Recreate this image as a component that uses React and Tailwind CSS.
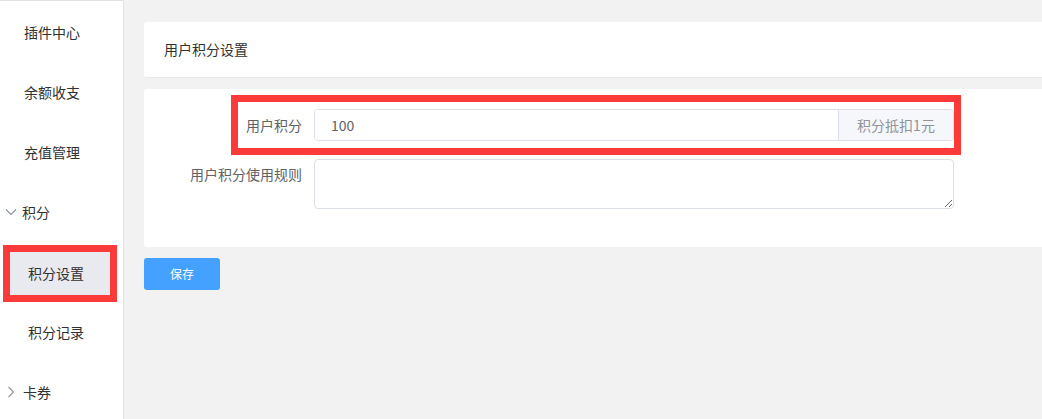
import React from 'react';

const font = { fontFamily: '"Noto Sans CJK SC", "Noto Sans", sans-serif' };

function ChevronDown() {
  return (
    <svg width="12" height="8" viewBox="0 0 12 8" className="mr-[5px] ml-[5px]">
      <path d="M1 1.5 L6 6.5 L11 1.5" fill="none" stroke="#8a8f99" strokeWidth="1.1" />
    </svg>
  );
}

function ChevronRight() {
  return (
    <svg width="8" height="12" viewBox="0 0 8 12" className="ml-[7px] mr-[8px]">
      <path d="M1.5 1 L6.5 6 L1.5 11" fill="none" stroke="#8a8f99" strokeWidth="1.1" />
    </svg>
  );
}

function Sidebar() {
  const item = 'h-[60px] flex items-center text-[14px] text-[#303133]';
  return (
    <aside className="w-[124px] shrink-0 bg-white border-r border-[#e2e2e2] border-t pt-[1px] min-h-[419px]">
      <div className={`${item} pl-[24px]`}>插件中心</div>
      <div className={`${item} pl-[24px]`}>余额收支</div>
      <div className={`${item} pl-[24px]`}>充值管理</div>
      <div className={item}><ChevronDown />积分</div>
      <div className="h-[60px] pt-[3px]">
        <div className="ml-[3px] w-[114px] h-[57px] border-[7px] border-[#fb3a3a] bg-[#e9eaef] flex items-center pl-[18px] text-[14px] text-[#303133]">
          积分设置
        </div>
      </div>
      <div className={`${item} pl-[28px]`}>积分记录</div>
      <div className={item}><ChevronRight />卡券</div>
    </aside>
  );
}

export default function App() {
  return (
    <div className="flex w-[1042px] h-[419px] overflow-hidden bg-[#f2f2f2]" style={font}>
      <Sidebar />
      <main className="flex-1 pt-[22px] pl-[20px]">
        <div className="h-[56px] bg-white rounded-l-[3px] border-b border-[#e8e9ec] flex items-center pl-[20px] text-[14px] text-[#303133]">
          用户积分设置
        </div>
        <div className="relative mt-[11px] h-[158px] bg-white rounded-l-[3px] pt-[20px] pl-[20px]">
          <div className="flex items-center h-[32px]">
            <label className="w-[150px] pr-[12px] text-right text-[14px] text-[#606266]">用户积分</label>
            <div className="flex w-[640px] h-[32px] border border-[#dcdfe6] rounded-[4px] overflow-hidden">
              <input
                defaultValue="100"
                className="flex-1 px-[16px] text-[14px] text-[#606266] outline-none bg-white"
                style={font}
              />
              <div className="w-[115px] bg-[#f5f7fa] border-l border-[#dcdfe6] flex items-center justify-center text-[14px] text-[#909399]">
                积分抵扣1元
              </div>
            </div>
          </div>
          <div className="flex items-start mt-[18px]">
            <label className="w-[150px] pr-[12px] text-right text-[14px] text-[#606266] pt-[5px] leading-[20px]">用户积分使用规则</label>
            <textarea
              className="w-[640px] h-[50px] border border-[#dcdfe6] rounded-[4px] outline-none resize-y px-[15px] py-[5px] text-[14px]"
              style={font}
            />
          </div>
          <div className="absolute left-[87px] top-[6px] w-[730px] h-[60px] border-[7px] border-[#fb3a3a] pointer-events-none" />
        </div>
        <button className="mt-[11px] w-[76px] h-[32px] bg-[#45a1ff] rounded-[3px] text-white text-[12px]" style={font}>
          保存
        </button>
      </main>
    </div>
  );
}
